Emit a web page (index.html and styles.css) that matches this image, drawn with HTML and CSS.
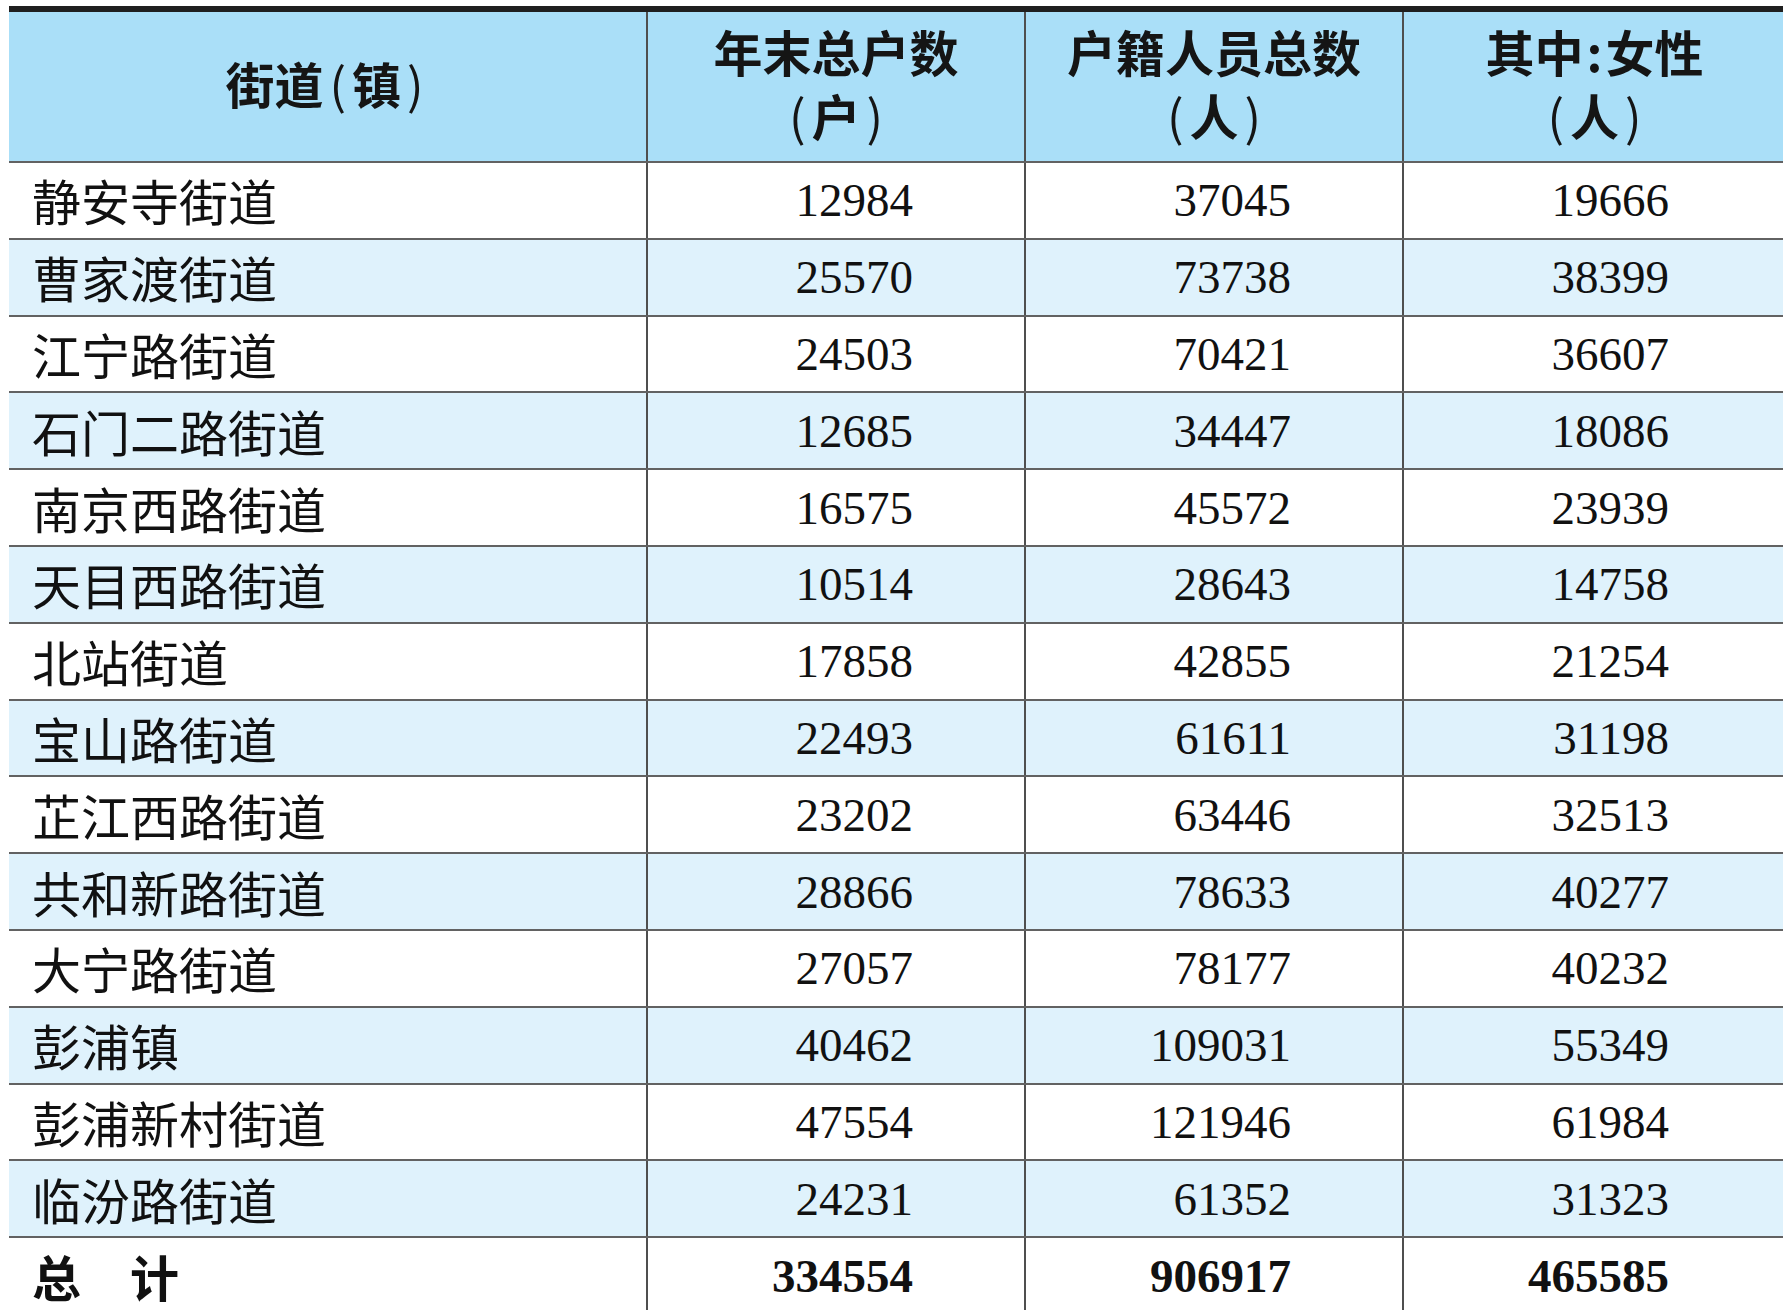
FILE: index.html
```html
<!DOCTYPE html>
<html lang="zh-CN">
<head>
<meta charset="utf-8">
<title>街道户籍人口</title>
<link rel="stylesheet" href="styles.css">
</head>
<body>
<table class="stats">
  <colgroup>
    <col class="c-name">
    <col class="c-num">
    <col class="c-num">
    <col class="c-last">
  </colgroup>
  <thead>
    <tr class="head">
      <th><span class="hl">街道<span class="p">(</span>镇<span class="p">)</span></span></th>
      <th><span class="hl">年末总户数</span><span class="hl"><span class="p">(</span>户<span class="p">)</span></span></th>
      <th><span class="hl">户籍人员总数</span><span class="hl"><span class="p">(</span>人<span class="p">)</span></span></th>
      <th><span class="hl">其中<span class="colon">:</span>女性</span><span class="hl"><span class="p">(</span>人<span class="p">)</span></span></th>
    </tr>
  </thead>
  <tbody>
    <tr><td class="name">静安寺街道</td><td class="num">12984</td><td class="num">37045</td><td class="num last">19666</td></tr>
    <tr class="alt"><td class="name">曹家渡街道</td><td class="num">25570</td><td class="num">73738</td><td class="num last">38399</td></tr>
    <tr><td class="name">江宁路街道</td><td class="num">24503</td><td class="num">70421</td><td class="num last">36607</td></tr>
    <tr class="alt"><td class="name">石门二路街道</td><td class="num">12685</td><td class="num">34447</td><td class="num last">18086</td></tr>
    <tr><td class="name">南京西路街道</td><td class="num">16575</td><td class="num">45572</td><td class="num last">23939</td></tr>
    <tr class="alt"><td class="name">天目西路街道</td><td class="num">10514</td><td class="num">28643</td><td class="num last">14758</td></tr>
    <tr><td class="name">北站街道</td><td class="num">17858</td><td class="num">42855</td><td class="num last">21254</td></tr>
    <tr class="alt"><td class="name">宝山路街道</td><td class="num">22493</td><td class="num">61611</td><td class="num last">31198</td></tr>
    <tr><td class="name">芷江西路街道</td><td class="num">23202</td><td class="num">63446</td><td class="num last">32513</td></tr>
    <tr class="alt"><td class="name">共和新路街道</td><td class="num">28866</td><td class="num">78633</td><td class="num last">40277</td></tr>
    <tr><td class="name">大宁路街道</td><td class="num">27057</td><td class="num">78177</td><td class="num last">40232</td></tr>
    <tr class="alt"><td class="name">彭浦镇</td><td class="num">40462</td><td class="num">109031</td><td class="num last">55349</td></tr>
    <tr><td class="name">彭浦新村街道</td><td class="num">47554</td><td class="num">121946</td><td class="num last">61984</td></tr>
    <tr class="alt"><td class="name">临汾路街道</td><td class="num">24231</td><td class="num">61352</td><td class="num last">31323</td></tr>
    <tr class="total"><td class="name">总　计</td><td class="num">334554</td><td class="num">906917</td><td class="num last">465585</td></tr>
  </tbody>
</table>
</body>
</html>
```

FILE: styles.css
```css
html, body {
  margin: 0;
  padding: 0;
  background: #ffffff;
  overflow: hidden;
}

body {
  padding-top: 6px;
  padding-left: 9px;
}

.stats {
  border-collapse: collapse;
  table-layout: fixed;
  width: 1776px;
  border-top: 6px solid #1f1f1f;
  color: #111111;
}

.c-name { width: 638px; }
.c-num { width: 378px; }
.c-last { width: 382px; }

.stats th,
.stats td {
  padding: 0;
  border-left: 2px solid #4f4f4f;
  border-bottom: 2px solid #626262;
}

.stats th:first-child,
.stats td:first-child {
  border-left: none;
}

.head {
  height: 153px;
  background: #aadff8;
}

.head th {
  font-family: "Noto Sans CJK SC", "Noto Sans", sans-serif;
  font-weight: 700;
  font-size: 49px;
  line-height: 64px;
  text-align: center;
  vertical-align: middle;
  color: #151515;
  padding-bottom: 8px;
}

.hl {
  display: block;
  height: 64px;
  line-height: 64px;
}

.p {
  display: inline-block;
  font-weight: 400;
  margin: 0 6px;
}

.colon {
  display: inline-block;
  margin: 0 3px;
}

.stats tbody tr {
  height: 76.8px;
  background: #ffffff;
}

.stats tbody tr.alt {
  background: #dff2fc;
}

.name {
  font-family: "Noto Sans CJK SC", "Noto Sans", sans-serif;
  font-weight: 400;
  font-size: 49px;
  line-height: 56px;
  padding-left: 23px !important;
  text-align: left;
  vertical-align: middle;
}

.num {
  font-family: "Liberation Serif", "Times New Roman", serif;
  font-size: 47px;
  line-height: 56px;
  text-align: right;
  vertical-align: middle;
  padding-right: 111px !important;
}

.num.last {
  padding-right: 116px !important;
}

.total .name {
  font-weight: 700;
}

.total .num {
  font-weight: 700;
}

.total td {
  border-bottom: none;
}
```
